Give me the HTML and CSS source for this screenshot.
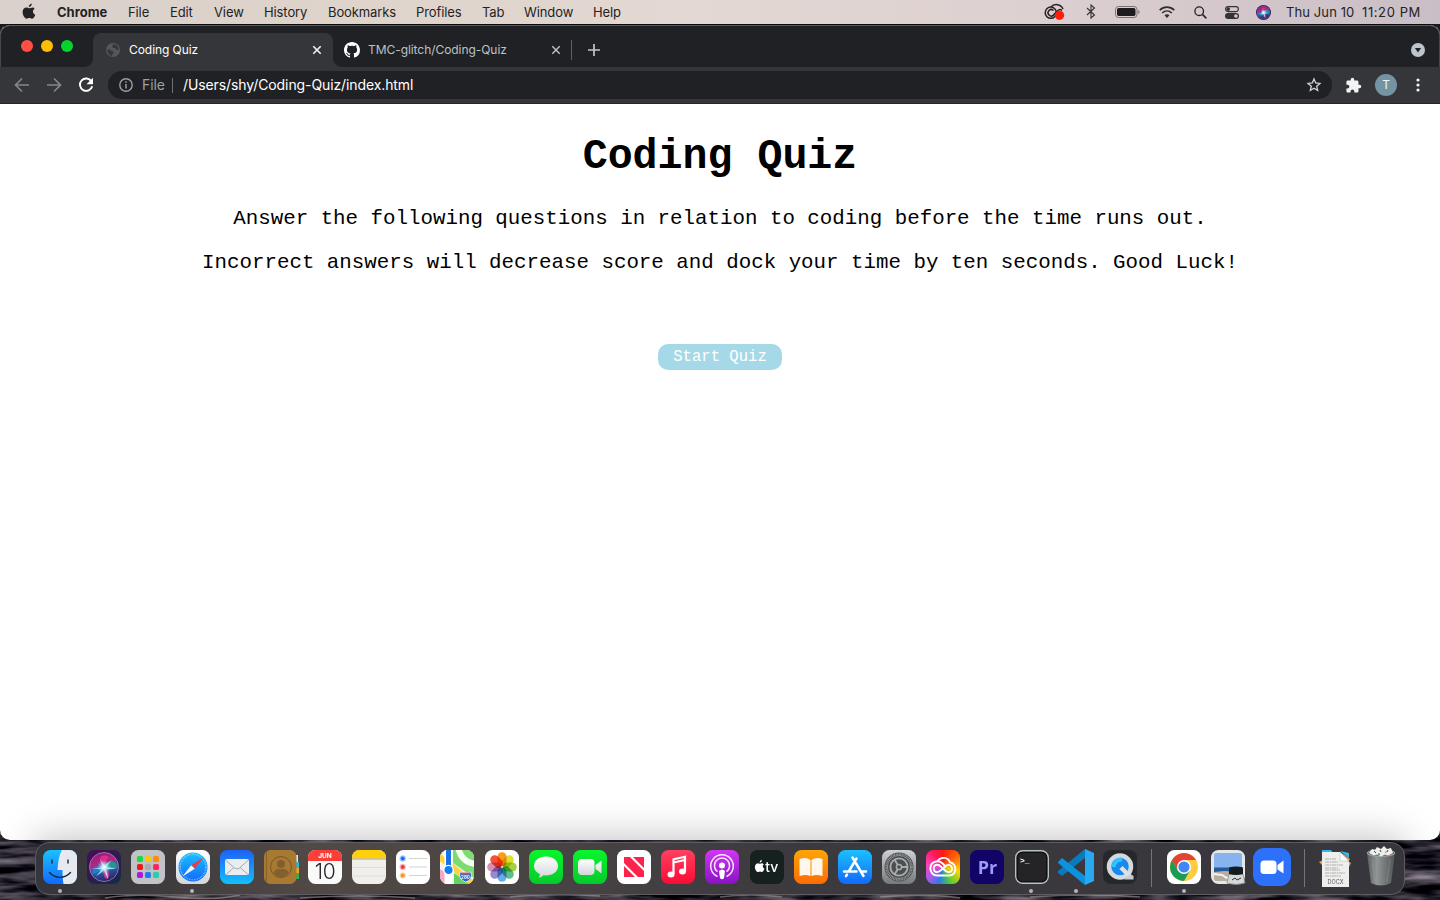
FILE: index.html
```html
<!DOCTYPE html>
<html lang="en">
<head>
<meta charset="utf-8">
<title>Coding Quiz</title>
<link rel="stylesheet" href="styles.css">
</head>
<body>
<div class="desktop">
  <header class="menubar">
    <svg class="apple" viewBox="0 0 14 17"><path d="M9.8.5c.1 1.8-1.3 3.4-3 3.5C6.600 2.300 8.200.7 9.800.5zM12.600 5.700c-2.500 1.600-2 4.900.7 6-.7 1.900-1.900 4-3.400 4-1 0-1.400-.6-2.600-.6s-1.700.6-2.600.6C2.700 15.700.6 12 .6 9 .6 6.100 2.400 4.500 4.300 4.500c1.200 0 2 .7 3 .7s1.800-.8 3.200-.8c.8 0 1.700.5 2.100 1.300z"/></svg>
    <nav class="menus">
      <b>Chrome</b><span>File</span><span>Edit</span><span>View</span><span>History</span><span>Bookmarks</span><span>Profiles</span><span>Tab</span><span>Window</span><span>Help</span>
    </nav>
    <div class="status">
      <svg class="st-cc" viewBox="0 0 22 16"><g fill="none" stroke="#242224" stroke-width="1.500"><path d="M7 3C10-.6 17-.2 19 5"/><circle cx="6.800" cy="8.700" r="5.600"/><path d="M9.500 6.500a3.200 3.200 0 1 0 0 4.600l4-4.300c1.300-1.400 3-1.600 4.600-.7"/></g><circle cx="15.500" cy="11.200" r="4.700" fill="#ff1d0b"/></svg>
      <svg class="st-bt" viewBox="0 0 10 15"><path d="M1 4l7.500 7L5 14V1l3.500 3L1 11" fill="none" stroke="#333" stroke-width="1.100"/></svg>
      <svg class="st-bat" viewBox="0 0 25 12"><rect x=".5" y=".5" width="21.500" height="11" rx="3" fill="none" stroke="#777176"/><rect x="2" y="2" width="18.500" height="8" rx="1.700" fill="#1d1b1d"/><path d="M23.300 4v4q1.300-.7 1.300-2t-1.300-2z" fill="#777176"/></svg>
      <svg class="st-wifi" viewBox="0 0 16 12"><g fill="none" stroke="#302e30" stroke-width="1.700"><path d="M.7 4.200c4.200-4.100 10.400-4.100 14.600 0M3.200 7c2.800-2.700 6.800-2.700 9.600 0"/></g><path d="M5.500 9.200q2.500-2 5 0L8 11.900z" fill="#302e30"/></svg>
      <svg class="st-search" viewBox="0 0 13 13"><circle cx="5.200" cy="5.200" r="4.300" fill="none" stroke="#242224" stroke-width="1.300"/><path d="M8.400 8.400l4 4" stroke="#242224" stroke-width="1.500"/></svg>
      <svg class="st-cc2" viewBox="0 0 14 13"><rect x=".6" y=".6" width="12.800" height="5" rx="2.500" fill="none" stroke="#333" stroke-width="1.100"/><circle cx="3.200" cy="3.100" r="1.900" fill="#333"/><rect y="7" width="14" height="6" rx="3" fill="#333"/><circle cx="10.900" cy="10" r="1.800" fill="#d5cbd0"/></svg>
      <svg class="st-siri" viewBox="0 0 34 34"><circle cx="17" cy="17" r="17" fill="#2c1a5a"/><use href="#siri-orb"/></svg>
      <span class="date">Thu Jun 10</span><span class="clock">11:20 PM</span>
    </div>
  </header>

  <main class="window">
    <div class="tabstrip">
      <div class="lights"><i class="red"></i><i class="yellow"></i><i class="green"></i></div>
      <div class="tab active">
        <svg class="globe" viewBox="0 0 14 14"><circle cx="7" cy="7" r="7" fill="#55575b"/><path d="M1.300 6.200l3 .2 1 1.700 2.300.4.300 1.600-1.600 1.200-.3 1.700C3.500 12.500 1.200 9.800 1.300 6.200zM7.300 1.300L6 3.500l1.100 1.400 2.200-.2.600 1.800 2.700.8c.3-3-1.800-6-5.300-6z" fill="#35363a"/></svg>
        <span class="tab-title">Coding Quiz</span>
        <svg class="close" viewBox="0 0 10 10"><path d="M1.300 1.300l7.400 7.400m0-7.400L1.300 8.700" stroke="#f1f3f4" stroke-width="1.600"/></svg>
      </div>
      <div class="tab idle">
        <svg class="github" viewBox="0 0 16 16"><path fill="#fff" fill-rule="evenodd" d="M8 0C3.580 0 0 3.580 0 8c0 3.540 2.290 6.530 5.470 7.590.4.070.55-.17.55-.38 0-.19-.01-.82-.01-1.490-2.010.37-2.530-.49-2.690-.94-.09-.23-.48-.94-.82-1.130-.28-.15-.68-.52-.01-.53.63-.01 1.080.58 1.230.82.72 1.210 1.870.87 2.330.66.07-.52.28-.87.51-1.070-1.780-.2-3.640-.89-3.640-3.950 0-.87.31-1.590.82-2.150-.08-.2-.36-1.020.08-2.120 0 0 .67-.21 2.200.82.640-.18 1.320-.27 2-.27s1.360.09 2 .27c1.530-1.040 2.200-.82 2.200-.82.44 1.100.16 1.920.08 2.120.51.56.82 1.270.82 2.150 0 3.070-1.870 3.750-3.650 3.950.29.25.54.73.54 1.480 0 1.070-.01 1.930-.01 2.200 0 .21.15.46.55.38A8.010 8.010 0 0 0 16 8c0-4.420-3.580-8-8-8z"/></svg>
        <span class="tab-title">TMC-glitch/Coding-Quiz</span>
        <svg class="close" viewBox="0 0 10 10"><path d="M1.300 1.300l7.400 7.400m0-7.400L1.300 8.700" stroke="#c0c3c8" stroke-width="1.400"/></svg>
      </div>
      <svg class="plus" viewBox="0 0 12 12"><path d="M6 0v12M0 6h12" stroke="#c3c6ca" stroke-width="1.700"/></svg>
      <svg class="drop" viewBox="0 0 14 14"><circle cx="7" cy="7" r="7" fill="#bec4cb"/><path d="M3.900 5h6.200L7 9.500z" fill="#202124"/></svg>
    </div>
    <div class="toolbar">
      <svg class="nav" viewBox="0 0 16 16"><path d="M15 8H2M8 1.500L1.500 8 8 14.500" fill="none" stroke="#85878b" stroke-width="1.700"/></svg>
      <svg class="nav" viewBox="0 0 16 16"><path d="M1 8h13M8 1.500L14.500 8 8 14.500" fill="none" stroke="#85878b" stroke-width="1.700"/></svg>
      <svg class="nav" viewBox="0 0 16 16"><path d="M13.400 4.300A6.200 6.200 0 1 0 14.200 9.200" fill="none" stroke="#fff" stroke-width="1.900"/><path d="M15 .8v6.500H8.500z" fill="#fff"/></svg>
      <div class="omnibox">
        <svg class="info" viewBox="0 0 14 14"><circle cx="7" cy="7" r="6.200" fill="none" stroke="#9aa0a6" stroke-width="1.400"/><path d="M7 6v4.600M7 3.300v1.500" stroke="#9aa0a6" stroke-width="1.500"/></svg>
        <span class="scheme">File</span><span class="path">/Users/shy/Coding-Quiz/index.html</span>
        <svg class="star" viewBox="0 0 16 16"><path d="M8 2l1.700 4 4.300.4-3.300 2.900 1 4.200L8 11.300l-3.700 2.200 1-4.200L2 6.400 6.300 6z" fill="none" stroke="#d2d4d7" stroke-width="1.300"/></svg>
      </div>
      <svg class="puzzle" viewBox="0 0 24 24"><path fill="#f1f3f4" d="M20.500 11H19V7c0-1.100-.9-2-2-2h-4V3.500a2.500 2.500 0 0 0-5 0V5H4c-1.100 0-2 .9-2 2v3.800h1.500a2.700 2.700 0 0 1 0 5.400H2V20c0 1.100.9 2 2 2h3.800v-1.500a2.700 2.700 0 0 1 5.400 0V22H17c1.100 0 2-.9 2-2v-4h1.500a2.500 2.500 0 0 0 0-5z"/></svg>
      <span class="avatar">T</span>
      <svg class="dots" viewBox="0 0 4 14"><g fill="#f1f3f4"><circle cx="2" cy="2" r="1.600"/><circle cx="2" cy="7" r="1.600"/><circle cx="2" cy="12" r="1.600"/></g></svg>
    </div>
    <section class="page">
      <h1>Coding Quiz</h1>
      <p>Answer the following questions in relation to coding before the time runs out.</p>
      <p>Incorrect answers will decrease score and dock your time by ten seconds. Good Luck!</p>
      <button class="start">Start Quiz</button>
    </section>
  </main>

  <footer class="shore">
    <svg class="waves" viewBox="0 0 1440 75" preserveAspectRatio="none">
      <defs><filter id="ripple" x="0" y="0" width="100%" height="100%" color-interpolation-filters="sRGB"><feTurbulence type="fractalNoise" baseFrequency=".02 .12" numOctaves="3" seed="8"/><feColorMatrix values=".95 0 0 0 -.3  .9 0 0 0 -.29  .9 0 0 0 -.25  0 0 0 0 1"/></filter></defs>
      <rect width="1440" height="75" fill="#15151d"/><rect width="1440" height="75" filter="url(#ripple)"/>
      <g fill="none" stroke="#a39592" stroke-width="1.500" opacity=".6"><path d="M105 73q30-5 70-1t65-2M300 73q60-4 115 0M510 72q40-4 90-1M720 72q30-4 62 0M880 72q45-4 80 1M1030 72q60-4 110 0"/></g>
    </svg>
    <div class="dock">
      <div class="app running"><svg viewBox="0 0 34 34"><defs>
        <linearGradient id="blue" x2="0" y2="1"><stop stop-color="#1ac1ff"/><stop offset="1" stop-color="#1269fa"/></linearGradient>
        <linearGradient id="mail" x2="0" y2="1"><stop stop-color="#1d62f5"/><stop offset="1" stop-color="#13bffd"/></linearGradient>
        <linearGradient id="silver" x2="0" y2="1"><stop stop-color="#fff"/><stop offset="1" stop-color="#d3d7d8"/></linearGradient>
        <linearGradient id="siri-bg" x2="1" y2="1"><stop stop-color="#4c0a58"/><stop offset="1" stop-color="#102d4b"/></linearGradient>
        <linearGradient id="orb" x1=".3" x2=".6" y2="1"><stop stop-color="#8c1f78"/><stop offset=".35" stop-color="#b32586"/><stop offset=".6" stop-color="#2b5fae"/><stop offset="1" stop-color="#2a1f62"/></linearGradient>
        <radialGradient id="glow"><stop stop-color="#fff"/><stop offset=".35" stop-color="#c9f3ff" stop-opacity=".8"/><stop offset="1" stop-color="#7adfff" stop-opacity="0"/></radialGradient>
        <linearGradient id="green" x2="0" y2="1"><stop stop-color="#08f62c"/><stop offset="1" stop-color="#06c92d"/></linearGradient>
        <linearGradient id="red" x2="0" y2="1"><stop stop-color="#ff415f"/><stop offset="1" stop-color="#fa0b35"/></linearGradient>
        <linearGradient id="purple" x2="0" y2="1"><stop stop-color="#d137f2"/><stop offset="1" stop-color="#8a12c4"/></linearGradient>
        <linearGradient id="orange" x2="0" y2="1"><stop stop-color="#ffa506"/><stop offset="1" stop-color="#fc6b04"/></linearGradient>
        <linearGradient id="metal" x2="0" y2="1"><stop stop-color="#cbd1d5"/><stop offset="1" stop-color="#777a7c"/></linearGradient>
        <linearGradient id="bin" x2="1"><stop stop-color="#5e6463"/><stop offset=".35" stop-color="#9a9e9d"/><stop offset=".65" stop-color="#787c7c"/><stop offset="1" stop-color="#545858"/></linearGradient>
        <clipPath id="round"><rect width="34" height="34" rx="7.500"/></clipPath>
        <g id="siri-orb"><circle cx="17" cy="17" r="14.500" fill="url(#orb)"/><path d="M17 17C9 8 14 3 22 7q-4 3-5 10" fill="#ec2f8d" opacity=".8"/><path d="M17 17C23 9 30 10 30 18q-6 3-13-1" fill="#1fa08e" opacity=".85"/><path d="M17 17C8 14 4 19 6 24q6-1 11-7" fill="#1a86c8" opacity=".85"/><path d="M17 17q8 4 4 12-6 1-4-12" fill="#d33a93" opacity=".85"/><path d="M4 19q9-1 12-2-2-5-3-8 3 5 5 7 3-4 7-6-4 4-6 7 5 1 10 1-6 2-10 1 2 5 2 10-3-5-4-9-4 4-8 6 4-4 6-7-6 0-11 0z" fill="#d9ffff" opacity=".75"/><circle cx="17" cy="17" r="7" fill="url(#glow)"/><circle cx="17" cy="17" r="14.500" fill="none" stroke="#b58eb7" stroke-width=".7"/></g>
      </defs><g clip-path="url(#round)"><rect width="34" height="34" fill="url(#blue)"/><path d="M19 0h15v34H20.500c-.7-4-1-9-1-14H14.500C15 12 16 5 19 0z" fill="#e6eaf0"/></g><path d="M9 10v3M25 10v3M6.500 22.500c6 6.500 15 6.500 21 0" stroke="#14293a" stroke-width="1.400" fill="none" stroke-linecap="round"/></svg></div>
      <div class="app"><svg viewBox="0 0 34 34"><rect width="34" height="34" rx="7.500" fill="url(#siri-bg)"/><use href="#siri-orb"/></svg></div>
      <div class="app"><svg viewBox="0 0 34 34"><rect width="34" height="34" rx="7.500" fill="#c2c3c6"/><g stroke="#aaa" stroke-width=".2"><rect x="6" y="6" width="6" height="6" rx="1.500" fill="#11df3f"/><rect x="14" y="6" width="6" height="6" rx="1.500" fill="#ffc800"/><rect x="22" y="6" width="6" height="6" rx="1.500" fill="#ff8a0c"/><rect x="6" y="14" width="6" height="6" rx="1.500" fill="#ed1420"/><rect x="14" y="14" width="6" height="6" rx="1.500" fill="#a5afb3"/><rect x="22" y="14" width="6" height="6" rx="1.500" fill="#ff2363"/><rect x="6" y="22" width="6" height="6" rx="1.500" fill="#ac13e4"/><rect x="14" y="22" width="6" height="6" rx="1.500" fill="#187cf5"/><rect x="22" y="22" width="6" height="6" rx="1.500" fill="#1fd3a8"/></g></svg></div>
      <div class="app running"><svg viewBox="0 0 34 34"><rect width="34" height="34" rx="7.500" fill="url(#silver)"/><circle cx="17" cy="17" r="14.500" fill="url(#blue)"/><circle cx="17" cy="17" r="12.800" fill="none" stroke="#d6efff" stroke-width="1.500" stroke-dasharray=".45 1.230"/><path d="M27.500 7.500L15.200 15.200l3.600 3.600z" fill="#f03a3e"/><path d="M6.500 26.500l8.700-11.300 3.600 3.600z" fill="#f2f6fc"/></svg></div>
      <div class="app"><svg viewBox="0 0 34 34"><rect width="34" height="34" rx="7.500" fill="url(#mail)"/><rect x="5" y="9" width="24" height="16" rx="2" fill="#e9edf0"/><path d="M5.500 10l9 8q2.500 2 5 0l9-8M6 24.500l8-7m14 7l-8-7" fill="none" stroke="#a2abb1" stroke-width="1"/></svg></div>
      <div class="app"><svg viewBox="0 0 34 34"><path d="M28 5h6v8h-6z" fill="#e5e6e5"/><path d="M28 12h7v6h-7z" fill="#24b9df"/><path d="M28 18h7v5h-7z" fill="#f3a427"/><path d="M28 23h7v6h-7z" fill="#27b64b"/><rect width="32.500" height="34" rx="6.500" fill="#a77932"/><path d="M2.500 2v30" stroke="#8b6226"/><circle cx="17" cy="17" r="10.500" fill="none" stroke="#795827"/><circle cx="17" cy="14" r="4" fill="#80602e"/><path d="M9.500 23q1.500-4 5-4h5q3.500 0 5 4-7.500 8-15 0z" fill="#80602e"/></svg></div>
      <div class="app"><svg viewBox="0 0 34 34"><g clip-path="url(#round)"><rect width="34" height="34" fill="#fafafa"/><rect width="34" height="11" fill="#fb3e38"/></g><text class="month" x="17" y="8.300">JUN</text><text class="day" x="17" y="29">10</text></svg></div>
      <div class="app"><svg viewBox="0 0 34 34"><g clip-path="url(#round)"><rect width="34" height="34" fill="#f1efeb"/><rect width="34" height="8.500" fill="#ffcf08"/><path d="M0 9h34" stroke="#9d9789" stroke-width=".8"/><path d="M0 17.500h34M0 26h34" stroke="#dddbd8" stroke-width=".8"/></g></svg></div>
      <div class="app"><svg viewBox="0 0 34 34"><rect width="34" height="34" rx="7.500" fill="#fff"/><path d="M13 8.500h18M13 17h18M13 25.500h18" stroke="#c8c8c8" stroke-width=".8"/><g fill-opacity=".35"><circle cx="6.700" cy="8.500" r="3.200" fill="#1472ff"/><circle cx="6.700" cy="17" r="3.200" fill="#ef3841"/><circle cx="6.700" cy="25.500" r="3.200" fill="#f5982b"/></g><circle cx="6.700" cy="8.500" r="2" fill="#1472ff"/><circle cx="6.700" cy="17" r="2" fill="#ef3841"/><circle cx="6.700" cy="25.500" r="2" fill="#f5982b"/></svg></div>
      <div class="app"><svg viewBox="0 0 34 34"><g clip-path="url(#round)"><path fill="#f3f4ef" d="M0 0h34v34H0z"/><path d="M13 0h21v28L13 13z" fill="#7edb6f"/><path d="M14 35V23l18 12" fill="#5fd560"/><path d="M18-3q3 15 17 17" fill="none" stroke="#f7fff3" stroke-width="6"/><path d="M-2 6l12 9 27 22" fill="none" stroke="#fcd339" stroke-width="6"/><path d="M0 19v15h5V22z" fill="#f6a9bb"/><path d="M4.500 0h8v34h-8z" fill="#fff"/><path d="M6 0h5v19H6z" fill="#1674e9"/></g><circle cx="8.500" cy="20" r="4.700" fill="#1180f5" stroke="#fff" stroke-width="1.300"/><path d="M20 22q5 2 11 0 2 8-5.500 10Q18 29 20 22z" fill="#2865c4" stroke="#eef5fb" stroke-width=".8"/><path d="M21 23.500h9" stroke="#e34852" stroke-width="1.800"/><text class="route" x="25.500" y="29">280</text></svg></div>
      <div class="app"><svg viewBox="0 0 34 34"><rect width="34" height="34" rx="7.500" fill="#fff"/><g class="petals"><rect x="12.500" y="2.200" width="9" height="14" rx="4.500" fill="#fb9a1c"/><rect x="12.500" y="2.200" width="9" height="14" rx="4.500" fill="#dfe02a" transform="rotate(45 17 17)"/><rect x="12.500" y="2.200" width="9" height="14" rx="4.500" fill="#a6cf45" transform="rotate(90 17 17)"/><rect x="12.500" y="2.200" width="9" height="14" rx="4.500" fill="#5cbd90" transform="rotate(135 17 17)"/><rect x="12.500" y="2.200" width="9" height="14" rx="4.500" fill="#66abe4" transform="rotate(180 17 17)"/><rect x="12.500" y="2.200" width="9" height="14" rx="4.500" fill="#978bd0" transform="rotate(225 17 17)"/><rect x="12.500" y="2.200" width="9" height="14" rx="4.500" fill="#d78fb4" transform="rotate(270 17 17)"/><rect x="12.500" y="2.200" width="9" height="14" rx="4.500" fill="#f8503a" transform="rotate(315 17 17)"/></g></svg></div>
      <div class="app"><svg viewBox="0 0 34 34"><rect width="34" height="34" rx="7.500" fill="url(#green)"/><path d="M17 6.500c7 0 12 4 12 9.500s-5 9.500-12 9.500l-2.500-.2q-2 2-5 2.500 1.700-1.600 1.300-3.800C7 22.400 5 19.400 5 16c0-5.500 5-9.500 12-9.500z" fill="url(#silver)"/></svg></div>
      <div class="app"><svg viewBox="0 0 34 34"><rect width="34" height="34" rx="7.500" fill="url(#green)"/><rect x="5" y="9" width="16.500" height="16" rx="4" fill="url(#silver)"/><path d="M22.500 15l6-4.500v13l-6-4.500z" fill="url(#silver)"/></svg></div>
      <div class="app"><svg viewBox="0 0 34 34"><rect width="34" height="34" rx="7.500" fill="#fff"/><path d="M7 7h6l14 14v6h-6L7 13zM16 7h11v11zM7 16l11 11H7z" fill="#fb244c"/></svg></div>
      <div class="app"><svg viewBox="0 0 34 34"><rect width="34" height="34" rx="7.500" fill="url(#red)"/><path d="M12.500 24V9.300l11.500-2.500v14.500M12.500 12.500L24 10" fill="none" stroke="#fff" stroke-width="2.200"/><ellipse cx="10" cy="24.500" rx="3.500" ry="2.900" fill="#fff"/><ellipse cx="21.500" cy="21.500" rx="3.500" ry="2.900" fill="#fff"/></svg></div>
      <div class="app"><svg viewBox="0 0 34 34"><rect width="34" height="34" rx="7.500" fill="url(#purple)"/><g fill="none" stroke="#f8e6ff" stroke-width="1.500"><path d="M12.500 26.500a11.300 11.300 0 1 1 9 0M12.500 21.700a7.600 7.600 0 1 1 9 0"/></g><circle cx="17" cy="15.500" r="3" fill="#fff"/><path d="M14 21q3-3 6 0l-1 7q-2 2.500-4 0z" fill="#fff"/></svg></div>
      <div class="app"><svg viewBox="0 0 34 34"><rect width="34" height="34" rx="7.500" fill="#15201f"/><path d="M11.800 9.800q.2 2.400-2.200 2.900-.1-2.200 2.200-2.900zM13.800 14.600q-2.400 1.900.6 4.200-1 3.400-2.900 3.200-1.500-.8-3 0C6.600 22.300 4.500 19 5 16q.8-3.200 3.700-2.600 1 .5 2.300 0 1.800-.4 2.800 1.200z" fill="#fff"/><text class="tv" x="15.200" y="21.800">tv</text></svg></div>
      <div class="app"><svg viewBox="0 0 34 34"><rect width="34" height="34" rx="7.500" fill="url(#orange)"/><path d="M16.500 10q-4.500-3.500-11-1v17q6.500-2 11 0zM17.500 10q4.500-3.500 11-1v17q-6.500-2-11 0z" fill="#fff7ec"/></svg></div>
      <div class="app"><svg viewBox="0 0 34 34"><rect width="34" height="34" rx="7.500" fill="url(#blue)"/><g stroke="#fff" stroke-width="2.500" stroke-linecap="round"><path d="M18.500 8.500L11 21M14.500 7.500L25.500 26M6 21.500h12.500M23.500 21.500H28M9 24.500l-1 1.700"/></g></svg></div>
      <div class="app"><svg viewBox="0 0 34 34"><rect width="34" height="34" rx="7.500" fill="url(#metal)"/><circle cx="17" cy="17" r="14.500" fill="#4c4e4f"/><circle cx="17" cy="17" r="13" fill="none" stroke="#a6aaab" stroke-width="1.600" stroke-dasharray=".8 .8"/><circle cx="17" cy="17" r="11.600" fill="none" stroke="#8e9293" stroke-width="1"/><g fill="none" stroke="#a9adaf" stroke-width="1.900"><circle cx="17" cy="17" r="8.600"/><circle cx="17" cy="17" r="2.600" stroke-width="1.500"/><path d="M15.700 14.700L12.500 9.500M19.600 17h6M15.700 19.300l-3.200 5.200"/></g></svg></div>
      <div class="app"><div class="cloud-bg"></div><svg class="cloud" viewBox="0 0 34 34"><g fill="none" stroke="#fff" stroke-width="1.900" stroke-linecap="round"><path d="M11.500 11.200C14.500 6.500 22 6.800 24 12.300 31 13.500 31.500 25.500 23 25.500H11.500C2 25.500 2 11.200 11.500 11.200q3 0 5.200 2.300l1.800 2"/><path d="M15 20.200q-1.800 1.800-3.700 1.800c-4.700 0-4.700-7.200 0-7.200q1.900 0 3.700 1.800l3.800 3.700q1.900 1.800 3.700 1.800c4.700 0 4.700-7.200 0-7.200q-1.900 0-3.700 1.800L15 20.200"/></g></svg></div>
      <div class="app"><svg viewBox="0 0 34 34"><rect width="34" height="34" rx="7.500" fill="#120366"/><text class="premiere" x="17.500" y="23.500">Pr</text></svg></div>
      <div class="app running"><svg viewBox="0 0 34 34"><rect x=".7" y=".7" width="32.600" height="32.600" rx="7" fill="#111" stroke="#b7c2c1" stroke-width="1.400"/><rect x="3" y="3" width="28" height="28" rx="4.500" fill="#242426"/><text class="prompt" x="5" y="12.500">&gt;_</text></svg></div>
      <div class="app running"><svg class="vscode" viewBox="0 0 38 38"><path d="M28 1l9 4v28l-9 4z" fill="#27a9f4"/><path d="M28 1v9L5 28l-4-3v-2z" fill="#087abd"/><path d="M1 14l4-4 23 18v9L1 15z" fill="#0d92dd"/></svg></div>
      <div class="app"><svg viewBox="0 0 34 34"><rect width="34" height="34" rx="7.500" fill="#25282a"/><circle cx="17" cy="16.500" r="11" fill="#168bed" stroke="#d3d9de" stroke-width="4.500"/><path d="M10.500 17q1-7.500 8.500-7.500" fill="none" stroke="#2dc5fe" stroke-width="4"/><path d="M18 17.500l8.500 8.500" stroke="#dce1e4" stroke-width="4.500"/><path d="M21 29.500h9.500v-3.500l-3-2" fill="#c5cbd0"/></svg></div>
      <div class="divider"></div>
      <div class="app running"><svg viewBox="0 0 34 34"><rect width="34" height="34" rx="7.500" fill="#fff"/><circle cx="17" cy="17" r="14" fill="#ffcd40"/><path d="M4.900 10A14 14 0 0 1 29.100 10H17l-6 10.500z" fill="#e44235"/><path d="M4.900 10A14 14 0 0 0 17 31l6-10.500H11z" fill="#199c57"/><circle cx="17" cy="17" r="7" fill="#fff"/><circle cx="17" cy="17" r="5.600" fill="#4285f4"/></svg></div>
      <div class="app"><svg viewBox="0 0 34 34"><rect width="34" height="34" rx="7.500" fill="#e6e7e8"/><path d="M3 5q0-2 2-2h24q2 0 2 2v13H3z" fill="#87b3ee"/><path d="M3 17.500h28V22H3z" fill="#275b9b"/><path d="M3 22l10-1 18 1v9H5q-2 0-2-2z" fill="#b9ae9d"/><path d="M3 24l8 1 5 3 4-2" stroke="#eef4f5" stroke-width="2" fill="none"/><path d="M18 24h14l2 9q-9 3-18 0z" fill="#d5d9d9" stroke="#7a8184" stroke-width=".7"/><path d="M18 17.500q7-2 14 0V24q-7 2-14 0z" fill="#161b1d"/><path d="M21 30l3-2 2 2 4-2" stroke="#333" fill="none"/></svg></div>
      <div class="app"><svg class="zoom-app" viewBox="0 0 38 38"><rect width="38" height="38" rx="11" fill="#2d70fa"/><rect x="7.500" y="12.500" width="16" height="13.500" rx="3.500" fill="#fff"/><path d="M24.500 17l6-4.500v13l-6-4z" fill="#fff"/></svg></div>
      <div class="divider"></div>
      <div class="app"><svg class="files" viewBox="0 0 34 38"><path d="M3 1h9l2 3H3zM21 2l9 2v5z" fill="#32b8f0"/><path d="M0 13l4-2v6zM29 12l3 2-2 4z" fill="#ee9b4a"/><path d="M3 3h18l9 9v26H3z" fill="#eeeeec"/><path d="M23 4l8 6-2 3z" fill="#ee9b4a"/><path d="M21 3l9 9h-9z" fill="#fff" stroke="#bbb" stroke-width=".6"/><path d="M6 10h11M6 13h13M6 16h18M6 19h13M6 21h15M6 24h20M6 27h16" stroke="#969696" stroke-width=".7" stroke-dasharray="4 .5 2 .5"/><text class="docx" x="16.500" y="35">DOCX</text></svg></div>
      <div class="app"><svg class="trash" viewBox="0 0 32 40"><path d="M2 6h28l-4 30q-10 5-20 0z" fill="url(#bin)" opacity=".92"/><ellipse cx="16" cy="6" rx="14" ry="3.500" fill="#6d7373" stroke="#adb1b0" stroke-width=".7"/><path d="M4 6l3-4 3 1 2-3 4 2 3-3 3 3 4-1 2 5-5 2.500-3-1-4 2-4-2-3 1z" fill="#eeefec"/><path d="M9 4l2 2m4-3l1 2m7-2l-1 2" stroke="#374b4d" stroke-width="1"/><path d="M13 7l2 .5" stroke="#3aa564" stroke-width="1.300"/><path d="M20 5.500l2-1" stroke="#e09036" stroke-width="1.300"/><path d="M7 12l3 23M25 12l-3 23" stroke="#b5b8b8" stroke-width=".6" opacity=".4"/></svg></div>
    </div>
  </footer>
</div>
</body>
</html>
```
FILE: styles.css
```css
* { box-sizing: border-box; }
body { margin: 0; overflow: hidden; font-family: Inter, "Liberation Sans", sans-serif; }
svg { display: block; flex: none; overflow: visible; }
.desktop { width: 1440px; height: 900px; display: flex; flex-direction: column; background: #191921; }

.menubar { height: 24px; display: flex; align-items: center; font-size: 13px; color: #242224; background: linear-gradient(90deg, #dad0cc, #ded4ca 25%, #e3d8d3 48%, #ddd0d1 72%, #c9bec5); }
.apple { width: 14px; height: 17px; margin: -1px 21px 0 22px; fill: #242224; }
.menus { display: grid; grid-template-columns: 71px 42px 44px 50px 64px 88px 66px 42px 69px 40px; line-height: 24px; letter-spacing: -.1px; }
.menus b { font-weight: 700; letter-spacing: 0; }
.status { margin-left: auto; display: flex; align-items: center; padding-right: 19px; white-space: nowrap; }
.st-cc { width: 22px; height: 16px; margin-right: 20px; }
.st-bt { width: 10px; height: 15px; margin: -2px 19px 0 0; }
.st-bat { width: 25px; height: 12px; margin-right: 19px; }
.st-wifi { width: 16px; height: 12px; margin: -1px 19px 0 0; }
.st-search { width: 13px; height: 13px; margin-right: 18px; }
.st-cc2 { width: 14px; height: 13px; margin-right: 17px; }
.st-siri { width: 15px; height: 15px; margin-right: 15px; }
.date { width: 76px; letter-spacing: .1px; margin-top: -1px; }
.clock { width: 59px; letter-spacing: .6px; margin-top: -1px; }

.window { position: relative; z-index: 1; flex: none; height: 816px; overflow: hidden; background: #fff; border-top: 1px solid #09090a; border-radius: 10px; }
.tabstrip { height: 42px; display: flex; align-items: flex-end; background: #202124; border-radius: 10px 10px 0 0; box-shadow: inset 0 1px #5b5c5e, inset 1px 0 #46474a, inset -1px 0 #46474a; }
.lights { width: 93px; height: 42px; padding: 15px 0 0 21px; display: flex; gap: 8px; }
.lights i { width: 12px; height: 12px; border-radius: 50%; }
.red { background: #ff4e45; }
.yellow { background: #ffbd03; }
.green { background: #05d32e; }
.tab { display: flex; align-items: center; height: 34px; font-size: 12px; letter-spacing: -.06px; }
.tab-title { flex: 1; white-space: nowrap; margin-top: -2px; }
.active { width: 240px; padding: 0 11px 0 13px; color: #fff; background: #35363a; border-radius: 8px 8px 0 0; position: relative; }
.active::before, .active::after { content: ""; position: absolute; bottom: 0; width: 8px; height: 8px; }
.active::before { left: -8px; background: radial-gradient(circle at 0 0, transparent 7.500px, #35363a 8px); }
.active::after { right: -8px; background: radial-gradient(circle at 100% 0, transparent 7.500px, #35363a 8px); }
.globe { width: 14px; height: 14px; margin-right: 9px; }
.close { width: 10px; height: 10px; }
.idle { width: 239px; padding: 0 11px; color: #bdc1c6; position: relative; }
.idle::after { content: ""; position: absolute; right: 0; top: 7px; width: 1px; height: 20px; background: #5f6165; }
.github { width: 16px; height: 16px; margin-right: 8px; }
.plus { width: 12px; height: 12px; margin: 0 0 11px 16px; }
.drop { width: 14px; height: 14px; margin: 0 15px 10px auto; }
.toolbar { height: 37px; display: flex; align-items: center; background: #35363a; border-bottom: 1px solid #27252a; padding: 0 20px 0 14px; }
.nav { width: 16px; height: 16px; margin-right: 16px; }
.omnibox { width: 1224px; height: 28px; margin-left: -2px; padding: 0 10px 0 11px; display: flex; align-items: center; border-radius: 14px; background: #202124; font-size: 14px; color: #fff; }
.info { width: 14px; height: 14px; margin-right: 9px; }
.scheme { width: 31px; height: 15px; line-height: 13px; color: #9aa0a6; border-right: 1px solid #6c7074; letter-spacing: -.1px; }
.path { margin: -2px 0 0 10px; letter-spacing: -.1px; }
.star { width: 16px; height: 16px; margin-left: auto; }
.puzzle { width: 17px; height: 17px; margin-left: 13px; }
.avatar { width: 22px; height: 22px; margin-left: 13px; border-radius: 50%; background: #7594a3; color: #eff4f6; font-size: 12px; line-height: 22px; text-align: center; }
.dots { width: 4px; height: 14px; margin-left: 19px; }

.page { height: 736px; display: flex; flex-direction: column; align-items: center; font-family: "Courier New", "Liberation Mono", monospace; color: #000; }
.page h1 { margin: 29px 0 27px; font-size: 41.600px; line-height: 47px; }
.page p { margin: 0 0 20px; font-size: 20.800px; line-height: 24px; white-space: nowrap; }
.start { width: 124px; height: 26px; margin-top: 49px; padding: 0; border: 0; border-radius: 10px; background: #a5d9e8; color: #fff; font: 15.600px/26px "Courier New", "Liberation Mono", monospace; }
.page::after { content: ""; position: absolute; left: 36px; right: 36px; bottom: -52px; height: 50px; border-radius: 14px; box-shadow: 0 0 38px 4px rgba(0, 0, 0, .25); }

.shore { height: 60px; position: relative; z-index: 0; display: flex; padding: 2px 35px 0; }
.waves { position: absolute; left: 0; top: -15px; width: 1440px; height: 75px; }
.dock { position: relative; width: 1370px; height: 53px; padding-left: 2px; display: flex; align-items: flex-start; border: 1px solid #5f5c61; border-radius: 14px; background: linear-gradient(90deg, #34363d, #403c3e 10%, #514945 20%, #4d4644 29%, #454143 42%, #3c3a3e 55%, #37363c); }
.app { width: 44.160px; height: 51px; padding-top: 7px; display: flex; justify-content: center; position: relative; }
.app svg { width: 34px; height: 34px; }
.running::after { content: ""; position: absolute; left: 20px; bottom: 1px; width: 4px; height: 4px; border-radius: 50%; background: #b7b4b7; }
.divider { width: 1px; height: 38px; margin: 6px 9.500px 0; background: #777579; }
.petals rect { mix-blend-mode: multiply; }
.cloud-bg { width: 34px; height: 34px; border-radius: 7.500px; background: conic-gradient(from 0deg, #ff1a0e, #ff6b08 55deg, #ffd500 105deg, #4ecb3b 155deg, #2b7be8 195deg, #a55ae8 230deg, #ff45bd 280deg, #ff165d 325deg, #ff1a0e); }
.app .cloud { position: absolute; left: 5px; top: 7px; }
.app .vscode, .app .zoom-app { width: 38px; height: 38px; margin-top: -2px; }
.app .files { width: 34px; height: 38px; margin-top: -1px; }
.app .trash { width: 32px; height: 40px; margin-top: -3px; }
.month { font: 700 6.500px Inter, sans-serif; fill: #fff; text-anchor: middle; }
.day { font: 300 21px Inter, sans-serif; fill: #272727; text-anchor: middle; letter-spacing: -.3px; }
.route { font: 700 4.500px Inter, sans-serif; fill: #fff; text-anchor: middle; }
.tv { font: 500 14px Inter, sans-serif; fill: #fff; }
.premiere { font: 700 18px "Open Sans", sans-serif; fill: #9e98ff; text-anchor: middle; }
.prompt { font: 700 8px "Liberation Mono", monospace; fill: #fff; }
.docx { font: 5.500px Inter, sans-serif; fill: #555; text-anchor: middle; }
```
